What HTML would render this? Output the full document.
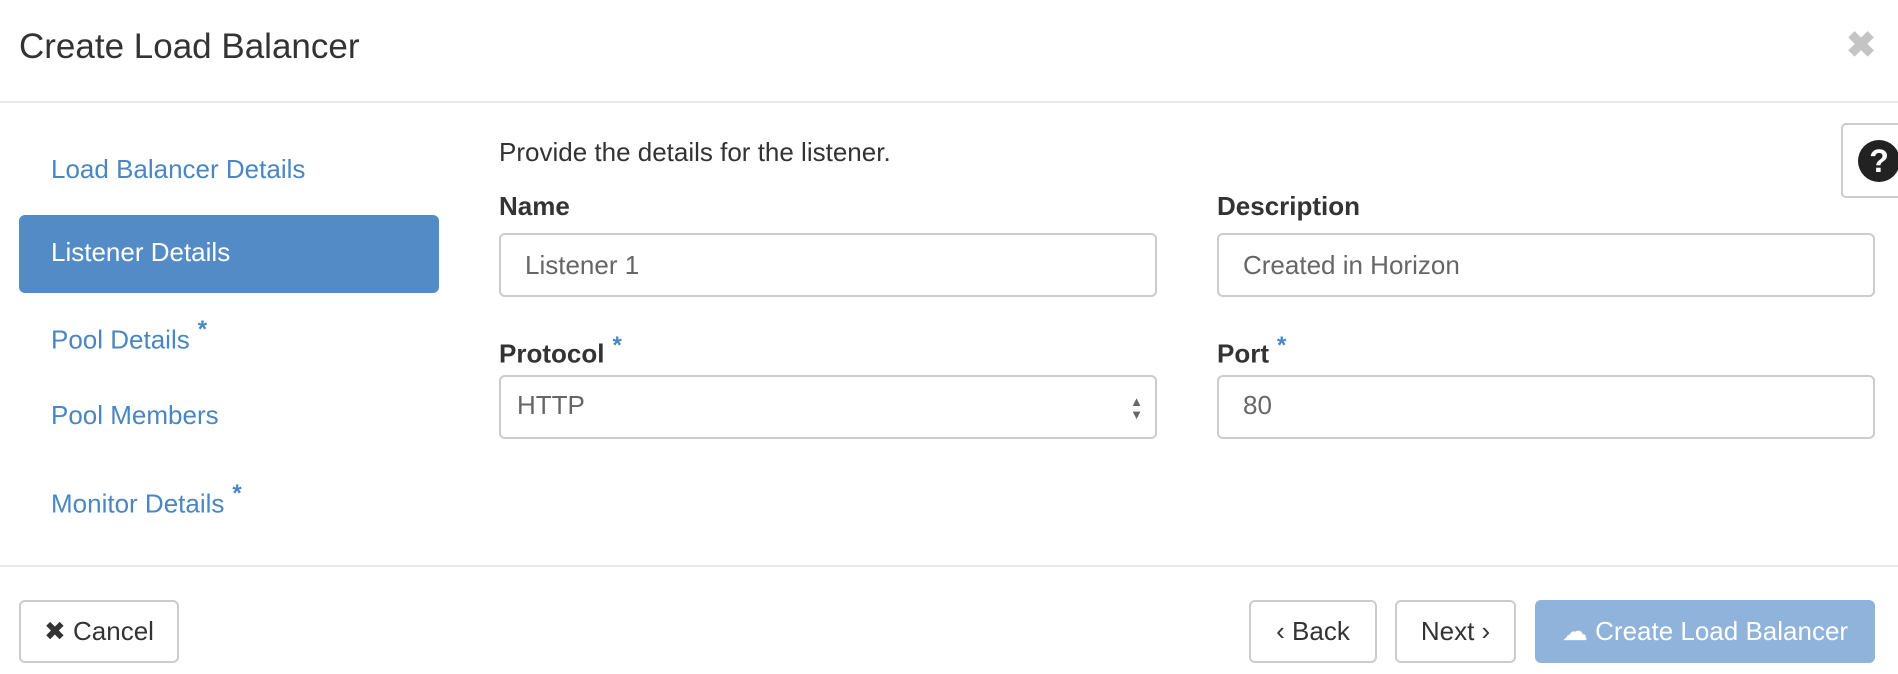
<!DOCTYPE html>
<html><head><style>
*{box-sizing:border-box;margin:0;padding:0}
body{width:1898px;height:674px;background:#fff;font-family:"Liberation Sans",Arial,sans-serif;color:#333;position:relative;overflow:hidden}
.a{position:absolute}
.title{left:19px;top:27px;font-size:35px;color:#333}
.close{left:1846px;top:24px;font-size:36px;color:#c4c4c4;font-weight:bold}
.hr{left:0;width:1898px;height:2px;background:#e8e8e8}
.nav{left:51px;font-size:26px;color:#4a86c2}
.nav sup{font-size:24px;position:relative;top:-2px;margin-left:8px;font-weight:bold}
.pill{left:19px;top:215px;width:420px;height:78px;background:#528bc5;border-radius:6px;color:#fff;font-size:26px;padding:22px 0 0 32px}
.lbl{font-size:26px;font-weight:bold;color:#333}
.lbl sup{color:#4a86c2;font-size:24px;margin-left:8px;font-weight:bold}
.inp{border:2px solid #ccc;border-radius:6px;height:64px;font-size:26px;color:#666;padding:15px 0 0 24px}
.help{left:1841px;top:123px;width:60px;height:75px;border:2px solid #ccc;border-radius:5px 0 0 5px;background:#fff}
.btn{top:600px;height:63px;border:2px solid #ccc;border-radius:6px;font-size:26px;color:#333;text-align:center;padding-top:14px;background:#fff}
</style></head><body>
<div class="a title">Create Load Balancer</div>
<div class="a close">✖</div>
<div class="a hr" style="top:101px"></div>
<div class="a nav" style="top:154px">Load Balancer Details</div>
<div class="a pill">Listener Details</div>
<div class="a nav" style="top:318px">Pool Details<sup>*</sup></div>
<div class="a nav" style="top:400px">Pool Members</div>
<div class="a nav" style="top:482px">Monitor Details<sup>*</sup></div>
<div class="a" style="left:499px;top:137px;font-size:26px;color:#333">Provide the details for the listener.</div>
<div class="a lbl" style="left:499px;top:191px">Name</div>
<div class="a lbl" style="left:1217px;top:191px">Description</div>
<div class="a inp" style="left:499px;top:233px;width:658px">Listener 1</div>
<div class="a inp" style="left:1217px;top:233px;width:658px">Created in Horizon</div>
<div class="a lbl" style="left:499px;top:332px">Protocol<sup>*</sup></div>
<div class="a lbl" style="left:1217px;top:332px">Port<sup>*</sup></div>
<div class="a inp" style="left:499px;top:375px;width:658px;padding:13px 0 0 16px">HTTP<span style="position:absolute;right:12px;top:18px;font-size:13px;line-height:13px;color:#666">▲<br>▼</span></div>
<div class="a inp" style="left:1217px;top:375px;width:658px;padding-top:13px">80</div>
<div class="a help"><svg width="44" height="44" viewBox="0 0 44 44" style="position:absolute;left:14px;top:14px"><circle cx="22" cy="22" r="21" fill="#222"/><text x="22" y="33" text-anchor="middle" font-family="Liberation Sans" font-weight="bold" font-size="32" fill="#fff">?</text></svg></div>
<div class="a hr" style="top:565px"></div>
<div class="a btn" style="left:19px;width:160px">✖ Cancel</div>
<div class="a btn" style="left:1249px;width:128px">‹ Back</div>
<div class="a btn" style="left:1395px;width:121px">Next ›</div>
<div class="a btn" style="left:1535px;width:340px;background:#8fb3da;border-color:#8fb3da;color:#fff">☁ Create Load Balancer</div>
</body></html>
